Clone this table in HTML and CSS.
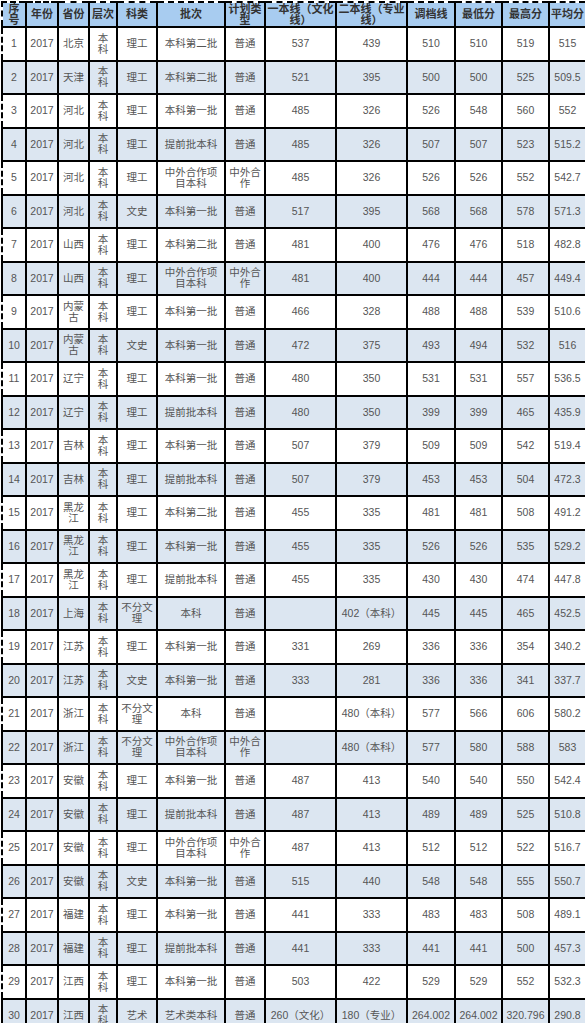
FILE: index.html
```html
<!DOCTYPE html>
<html lang="zh-CN">
<head>
<meta charset="utf-8">
<title>2017 录取分数</title>
<link rel="stylesheet" href="styles.css">
</head>
<body>
<table class="scores">
  <colgroup>
    <col class="c-no"><col class="c-year"><col class="c-prov"><col class="c-level"><col class="c-type">
    <col class="c-batch"><col class="c-plan"><col class="c-line1"><col class="c-line2">
    <col class="c-file"><col class="c-min"><col class="c-max"><col class="c-avg">
  </colgroup>
  <thead>
    <tr>
      <th class="h-no">序号</th><th>年份</th><th>省份</th><th>层次</th><th>科类</th><th>批次</th><th>计划类型</th><th>一本线（文化线）</th><th>二本线（专业线）</th><th>调档线</th><th>最低分</th><th>最高分</th><th>平均分</th>
    </tr>
  </thead>
  <tbody>
    <tr><td>1</td><td>2017</td><td>北京</td><td>本科</td><td>理工</td><td>本科第二批</td><td>普通</td><td>537</td><td>439</td><td>510</td><td>510</td><td>519</td><td>515</td></tr>
    <tr><td>2</td><td>2017</td><td>天津</td><td>本科</td><td>理工</td><td>本科第二批</td><td>普通</td><td>521</td><td>395</td><td>500</td><td>500</td><td>525</td><td>509.5</td></tr>
    <tr><td>3</td><td>2017</td><td>河北</td><td>本科</td><td>理工</td><td>本科第一批</td><td>普通</td><td>485</td><td>326</td><td>526</td><td>548</td><td>560</td><td>552</td></tr>
    <tr><td>4</td><td>2017</td><td>河北</td><td>本科</td><td>理工</td><td>提前批本科</td><td>普通</td><td>485</td><td>326</td><td>507</td><td>507</td><td>523</td><td>515.2</td></tr>
    <tr><td>5</td><td>2017</td><td>河北</td><td>本科</td><td>理工</td><td>中外合作项目本科</td><td>中外合作</td><td>485</td><td>326</td><td>526</td><td>526</td><td>552</td><td>542.7</td></tr>
    <tr><td>6</td><td>2017</td><td>河北</td><td>本科</td><td>文史</td><td>本科第一批</td><td>普通</td><td>517</td><td>395</td><td>568</td><td>568</td><td>578</td><td>571.3</td></tr>
    <tr><td>7</td><td>2017</td><td>山西</td><td>本科</td><td>理工</td><td>本科第二批</td><td>普通</td><td>481</td><td>400</td><td>476</td><td>476</td><td>518</td><td>482.8</td></tr>
    <tr><td>8</td><td>2017</td><td>山西</td><td>本科</td><td>理工</td><td>中外合作项目本科</td><td>中外合作</td><td>481</td><td>400</td><td>444</td><td>444</td><td>457</td><td>449.4</td></tr>
    <tr><td>9</td><td>2017</td><td>内蒙古</td><td>本科</td><td>理工</td><td>本科第一批</td><td>普通</td><td>466</td><td>328</td><td>488</td><td>488</td><td>539</td><td>510.6</td></tr>
    <tr><td>10</td><td>2017</td><td>内蒙古</td><td>本科</td><td>文史</td><td>本科第一批</td><td>普通</td><td>472</td><td>375</td><td>493</td><td>494</td><td>532</td><td>516</td></tr>
    <tr><td>11</td><td>2017</td><td>辽宁</td><td>本科</td><td>理工</td><td>本科第一批</td><td>普通</td><td>480</td><td>350</td><td>531</td><td>531</td><td>557</td><td>536.5</td></tr>
    <tr><td>12</td><td>2017</td><td>辽宁</td><td>本科</td><td>理工</td><td>提前批本科</td><td>普通</td><td>480</td><td>350</td><td>399</td><td>399</td><td>465</td><td>435.9</td></tr>
    <tr><td>13</td><td>2017</td><td>吉林</td><td>本科</td><td>理工</td><td>本科第一批</td><td>普通</td><td>507</td><td>379</td><td>509</td><td>509</td><td>542</td><td>519.4</td></tr>
    <tr><td>14</td><td>2017</td><td>吉林</td><td>本科</td><td>理工</td><td>提前批本科</td><td>普通</td><td>507</td><td>379</td><td>453</td><td>453</td><td>504</td><td>472.3</td></tr>
    <tr><td>15</td><td>2017</td><td>黑龙江</td><td>本科</td><td>理工</td><td>本科第二批</td><td>普通</td><td>455</td><td>335</td><td>481</td><td>481</td><td>508</td><td>491.2</td></tr>
    <tr><td>16</td><td>2017</td><td>黑龙江</td><td>本科</td><td>理工</td><td>本科第一批</td><td>普通</td><td>455</td><td>335</td><td>526</td><td>526</td><td>535</td><td>529.2</td></tr>
    <tr><td>17</td><td>2017</td><td>黑龙江</td><td>本科</td><td>理工</td><td>提前批本科</td><td>普通</td><td>455</td><td>335</td><td>430</td><td>430</td><td>474</td><td>447.8</td></tr>
    <tr><td>18</td><td>2017</td><td>上海</td><td>本科</td><td>不分文理</td><td>本科</td><td>普通</td><td></td><td>402（本科）</td><td>445</td><td>445</td><td>465</td><td>452.5</td></tr>
    <tr><td>19</td><td>2017</td><td>江苏</td><td>本科</td><td>理工</td><td>本科第一批</td><td>普通</td><td>331</td><td>269</td><td>336</td><td>336</td><td>354</td><td>340.2</td></tr>
    <tr><td>20</td><td>2017</td><td>江苏</td><td>本科</td><td>文史</td><td>本科第一批</td><td>普通</td><td>333</td><td>281</td><td>336</td><td>336</td><td>341</td><td>337.7</td></tr>
    <tr><td>21</td><td>2017</td><td>浙江</td><td>本科</td><td>不分文理</td><td>本科</td><td>普通</td><td></td><td>480（本科）</td><td>577</td><td>566</td><td>606</td><td>580.2</td></tr>
    <tr><td>22</td><td>2017</td><td>浙江</td><td>本科</td><td>不分文理</td><td>中外合作项目本科</td><td>中外合作</td><td></td><td>480（本科）</td><td>577</td><td>580</td><td>588</td><td>583</td></tr>
    <tr><td>23</td><td>2017</td><td>安徽</td><td>本科</td><td>理工</td><td>本科第一批</td><td>普通</td><td>487</td><td>413</td><td>540</td><td>540</td><td>550</td><td>542.4</td></tr>
    <tr><td>24</td><td>2017</td><td>安徽</td><td>本科</td><td>理工</td><td>提前批本科</td><td>普通</td><td>487</td><td>413</td><td>489</td><td>489</td><td>525</td><td>510.8</td></tr>
    <tr><td>25</td><td>2017</td><td>安徽</td><td>本科</td><td>理工</td><td>中外合作项目本科</td><td>中外合作</td><td>487</td><td>413</td><td>512</td><td>512</td><td>522</td><td>516.7</td></tr>
    <tr><td>26</td><td>2017</td><td>安徽</td><td>本科</td><td>文史</td><td>本科第一批</td><td>普通</td><td>515</td><td>440</td><td>548</td><td>548</td><td>555</td><td>550.7</td></tr>
    <tr><td>27</td><td>2017</td><td>福建</td><td>本科</td><td>理工</td><td>本科第一批</td><td>普通</td><td>441</td><td>333</td><td>483</td><td>483</td><td>508</td><td>489.1</td></tr>
    <tr><td>28</td><td>2017</td><td>福建</td><td>本科</td><td>理工</td><td>提前批本科</td><td>普通</td><td>441</td><td>333</td><td>441</td><td>441</td><td>500</td><td>457.3</td></tr>
    <tr><td>29</td><td>2017</td><td>江西</td><td>本科</td><td>理工</td><td>本科第一批</td><td>普通</td><td>503</td><td>422</td><td>529</td><td>529</td><td>552</td><td>532.3</td></tr>
    <tr><td>30</td><td>2017</td><td>江西</td><td>本科</td><td>艺术</td><td>艺术类本科</td><td>普通</td><td>260（文化）</td><td>180（专业）</td><td>264.002</td><td>264.002</td><td>320.796</td><td>290.8</td></tr>
  </tbody>
</table>
</body>
</html>
```
FILE: styles.css
```css
html, body {
  margin: 0;
  padding: 0;
  background: #ffffff;
  overflow: hidden;
}

.scores {
  margin: 1px 0 0 1px;
  width: 584px;
  table-layout: fixed;
  border-collapse: collapse;
  font-family: "Liberation Sans", "Noto Sans CJK SC", sans-serif;
  font-size: 10.5px;
  line-height: 11px;
  color: #555555;
}

.c-no { width: 24px; }
.c-year { width: 32px; }
.c-prov { width: 31px; }
.c-level { width: 28px; }
.c-type { width: 40px; }
.c-batch { width: 68px; }
.c-plan { width: 40px; }
.c-line1 { width: 71px; }
.c-line2 { width: 71px; }
.c-file { width: 48px; }
.c-min { width: 47px; }
.c-max { width: 47px; }
.c-avg { width: 37px; }

.scores thead tr {
  height: 25px;
}

.scores th {
  padding: 0;
  background: #a8ccf0;
  color: #333333;
  font-size: 11px;
  font-weight: bold;
  line-height: 11px;
  text-align: center;
  vertical-align: middle;
  border: 2px solid #000000;
  border-top: 2px dashed #000000;
  overflow: hidden;
}

.scores th.h-no {
  padding: 0 2px;
  border-left: 2px dashed #000000;
}

.scores tbody tr {
  height: 33.5px;
}

.scores td {
  padding: 0 3px;
  text-align: center;
  vertical-align: middle;
  border: 2px solid #000000;
  white-space: normal;
}

.scores tbody tr:nth-child(even) td {
  background: #dce6f1;
}

.scores tbody tr:nth-child(odd) td:first-child {
  border-left: 2px dashed #000000;
}
```
